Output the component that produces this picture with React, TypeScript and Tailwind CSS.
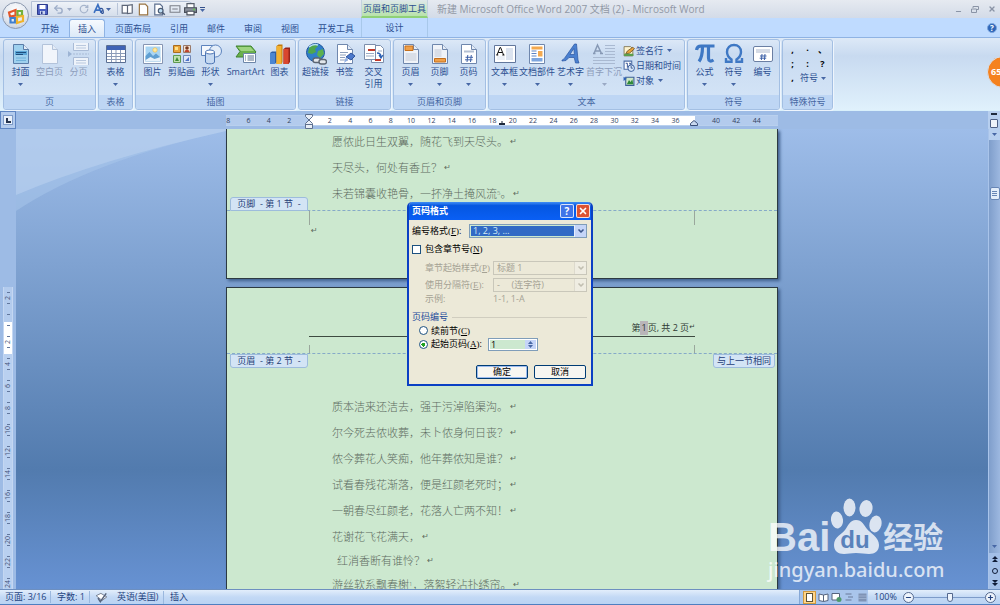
import type { ReactNode } from 'react';
import { Undo2, RotateCw, ChevronDown, X, Minus, Plus } from 'lucide-react';

const tabs = ['开始', '插入', '页面布局', '引用', '邮件', '审阅', '视图', '开发工具'];

const hRuler = [
    '8', '6', '4', '2', '', '2', '4', '6', '8', '10', '12', '14', '16', '18', '20', '22', '24',
    '26', '28', '30', '32', '34', '36', '', '40', '42', '44',
];

const vRuler = ['2', '', '2', '4', '6', '8', '10', '12', '14', '16', '18', '20', '22', '24'];

const pageOneLines = ['愿侬此日生双翼，随花飞到天尽头。', '天尽头，何处有香丘？'];

const pageTwoLines = [
    '质本洁来还洁去，强于污淖陷渠沟。',
    '尔今死去侬收葬，未卜侬身何日丧？',
    '侬今葬花人笑痴，他年葬侬知是谁？',
    '试看春残花渐落，便是红颜老死时；',
    '一朝春尽红颜老，花落人亡两不知！',
    '花谢花飞花满天，',
];

function Icon({ children, size = 22 }: { children: ReactNode; size?: number }) {
    return (
        <svg viewBox="0 0 22 22" width={size} height={size} fill="none" className="shrink-0" aria-hidden="true">
            {children}
        </svg>
    );
}

/* Blank sheet with a folded corner, shared by most of the page icons */
function Sheet({ fill = '#fff', stroke = '#6f87ad' }: { fill?: string; stroke?: string }) {
    return (
        <>
            <path d="M3.5 1.5h10l5 5v14h-15z" fill={fill} stroke={stroke} />
            <path d="M13.5 1.5v5h5" fill="#e4ecf7" stroke={stroke} />
        </>
    );
}

const icons: Record<string, ReactNode> = {
    cover: (
        <>
            <Sheet fill="#9fd0ee" stroke="#5a7ca8" />
            <path d="M5 8h12v4H5z" fill="#5aa5d6" />
            <path d="M6 9.500h10M6 11.500h7" stroke="#1d4f80" />
            <path d="M6 15h10M6 17.500h10" stroke="#6fb0d9" />
        </>
    ),
    blank: <Sheet fill="#f1f5fb" stroke="#b3c3da" />,
    pageBreak: (
        <>
            <path d="M5.500 0v7.500h15V0M5.500 22v-7.500h15V22" fill="#eef3fa" stroke="#a9bbd6" />
            <path d="M8 2.500h10M8 5h10M8 17.500h10M8 20h10" stroke="#b9c8de" />
            <path d="M5 11h16" stroke="#a9bbd6" strokeDasharray="2 1" />
            <path d="M0 8l4 3-4 3z" fill="#9db4d4" />
        </>
    ),
    table: (
        <>
            <path d="M1.500 2.500h19v17h-19z" fill="#fff" stroke="#5b6f93" />
            <path d="M2 3h18v4H2z" fill="#3f62b5" />
            <path d="M2 10.500h18M2 13.500h18M2 16.500h18M6.500 7v12M11 7v12M15.500 7v12" stroke="#8b9bb8" />
        </>
    ),
    picture: (
        <>
            <path d="M1.500 1.500h19v19h-19z" fill="#fff" stroke="#8796b3" />
            <path d="M3.500 3.500h15v15h-15z" fill="#a9d5f3" />
            <circle cx="13" cy="7" r="2.200" fill="#ffe9a0" stroke="#efb93d" strokeWidth=".6" />
            <path d="M3.500 13l4-4 3.500 4 3-2.500 4.500 4v4h-15z" fill="#5f9fd2" />
            <path d="M3.500 17l5-3 4 2 6-2v4.500h-15z" fill="#e7f2fa" />
        </>
    ),
    clip: (
        <>
            <path d="M2.500 2.500h7v7h-7z" fill="#e9a43b" stroke="#a86d1f" />
            <path d="M12.500 2.500h7v7h-7z" fill="#f3e3d5" stroke="#9a7a6a" />
            <path d="M2.500 12.500h7v7h-7z" fill="#bfe0b0" stroke="#5f9a50" />
            <path d="M12.500 12.500h7v7h-7z" fill="#dfe8f8" stroke="#7089b8" />
            <path d="M4 4h3v3H4z" fill="#ffe28a" />
            <circle cx="16" cy="5" r="1.800" fill="#7c3a1e" />
            <path d="M13.500 9c0-3 5-3 5 0z" fill="#c0452d" />
            <path d="M4 18l2-4 2 4z" fill="#3e8b33" />
            <path d="M14 18l4-4v4z" fill="#4f74c9" />
        </>
    ),
    shapes: (
        <>
            <path d="M1.500 2.500h11v10h-11z" fill="#f4f8fd" stroke="#5c83bd" />
            <circle cx="15.500" cy="8" r="6" fill="#e3edf9" stroke="#5c83bd" />
            <path d="M5.500 9v10c0 2.400 9 2.400 9 0V9z" fill="#c5d9f1" stroke="#4e76b4" />
            <ellipse cx="10" cy="9" rx="4.500" ry="2" fill="#fff" stroke="#4e76b4" />
        </>
    ),
    smart: (
        <>
            <path d="M1 3h15l5 6-5 5H1l4-5.500z" fill="#6ab04c" stroke="#3f8230" />
            <path d="M2.500 4h13l3.500 4H6z" fill="#9dd47f" />
            <path d="M8.500 10.500h12v9h-12z" fill="#fff" stroke="#6d86a8" />
            <path d="M10 13h1M12.500 13h6.500M10 15h1M12.500 15h6.500M10 17h1M12.500 17h6.500" stroke="#56708f" />
        </>
    ),
    chart: (
        <>
            <path d="M1 10l2-1.500h4.500V19L6 21H1z" fill="#2b5fa8" />
            <path d="M1 10h5v11H1z" fill="#4b86d2" />
            <path d="M7.500 3L9.500 1.500h4V19L12.500 21h-5z" fill="#c37a0b" />
            <path d="M7.500 3h5v18h-5z" fill="#f2b233" />
            <path d="M14.500 6l2-1.500h4.500V19l-1.500 2h-5z" fill="#97241a" />
            <path d="M14.500 6h5v15h-5z" fill="#d9472f" />
        </>
    ),
    link: (
        <>
            <circle cx="10.500" cy="9.500" r="9" fill="#2f7fc9" stroke="#1f559b" />
            <path d="M4 5c3-4 8-4 9-2l-3 3 1 3-4 2-4-1z" fill="#4ea64d" />
            <path d="M13 8l5-2 1 5-4 4-3-3z" fill="#5bb04f" />
            <path d="M4 4c3-2.500 6-3 9-2" stroke="#b9e0f5" strokeWidth="1.500" />
            <rect x="8" y="15" width="8" height="4.500" rx="2.200" stroke="#5c6572" strokeWidth="1.400" fill="#e2e6ea" />
            <rect x="14" y="16.500" width="7.500" height="4.500" rx="2.200" stroke="#5c6572" strokeWidth="1.400" fill="#e2e6ea" />
        </>
    ),
    bookmark: (
        <>
            <Sheet />
            <path d="M6 9.500h8M6 12h6M6 14.500h5M6 17h8" stroke="#8da0bd" />
            <path d="M12 14l5-4 4 3-4 4z" fill="#4b78cb" stroke="#2d549f" />
            <path d="M12 14l2 3-4 3z" fill="#8faee4" />
        </>
    ),
    cross: (
        <>
            <path d="M8.500 2.500h9l3 3v14h-12z" fill="#fff" stroke="#7c8eac" />
            <path d="M1.500 1.500h11v15h-11z" fill="#fff" stroke="#7c8eac" />
            <path d="M5 7h7" stroke="#c23a2c" strokeWidth="2" />
            <path d="M3 10.500h8M3 13h8M15 8h4" stroke="#9aabc5" />
            <path d="M12 17h6" stroke="#c23a2c" strokeWidth="2" />
            <path d="M14 10c3 0 4 1.500 4 4m-2-2l2 3 2-3" stroke="#2d62b5" strokeWidth="1.300" />
        </>
    ),
    header: (
        <>
            <Sheet fill="#f0f3f8" />
            <path d="M5 3h8v4.500H5z" fill="#f0a049" stroke="#c46f1c" />
            <path d="M5.500 10h11v8h-11z" fill="#d9dee7" />
        </>
    ),
    footer: (
        <>
            <Sheet fill="#f0f3f8" />
            <path d="M5.500 6h7v8h-7z" fill="#d9dee7" />
            <path d="M5.500 15.500h11v3.500h-11z" fill="#f0a049" stroke="#c46f1c" />
        </>
    ),
    number: (
        <>
            <Sheet />
            <path d="M6 8.500h10" stroke="#b5c1d4" strokeWidth="2" />
            <path d="M9.800 12l-.8 7M13.300 12l-.8 7M7.500 14.300h7.500M7 16.800h7.500" stroke="#3f62a8" />
        </>
    ),
    textbox: (
        <>
            <path d="M.5 2.500h21v17H.5z" fill="#fff" stroke="#62779c" />
            <path d="M12 5h7v12h-7z" fill="#dbe3ef" />
            <path d="M3 13h8v4H3z" fill="#edf1f7" />
            <path d="M3 12l3-7.500h.6l3 7.500M4.200 9.500h4M2.300 12h2M8.300 12h2.200" stroke="#111" />
        </>
    ),
    parts: (
        <>
            <path d="M3.500 1.500h15v19h-15z" fill="#fff" stroke="#6f87ad" />
            <path d="M5.500 3.500h11v3h-11z" fill="#f4a94f" />
            <path d="M5.500 8h5M5.500 10.500h5M5.500 13h5" stroke="#5c83c4" />
            <path d="M12 8h4.500v5.500H12z" fill="#f4a94f" />
            <path d="M5.500 15h11v3.500h-11z" fill="#7da5de" />
        </>
    ),
    wordart: (
        <path
            d="M2 17c1-.3 2-1 3-2.500L14.500 1h2L18 17l1 3h-3.500l-1.300-5.500H9L6 17.500 2 18zM10 11.500h4.400l-.6-6z"
            fill="#4a80d0"
            stroke="#2a55a0"
            strokeWidth=".7"
        />
    ),
    dropcap: (
        <>
            <path d="M1 10.500L4.500 2l4 8.500M2.500 8h5M0 10.500h2.500M7 10.500h3" stroke="#8799b5" strokeWidth="1.500" />
            <path d="M12 2.500h10M12 5.500h10M12 8.500h10M12 11.500h10M0 14.500h22M0 17.500h22M0 20.500h22" stroke="#a9b9d1" />
        </>
    ),
    pi: (
        <path
            d="M2.500 7C3 3.800 4.500 3 7 3h13.500M8.500 3.500c0 7-.5 11-3.500 15M14.500 3.500V15c0 3 2 4 5 2"
            stroke="#3f78c4"
            strokeWidth="3.200"
        />
    ),
    omega: (
        <path
            d="M3 15v3.800h5.500v-2.300C5.500 14.500 4 12 4 9c0-4.500 3-7 7-7s7 2.500 7 7c0 3-1.500 5.500-4.500 7.500v2.300H19V15"
            stroke="#3f78c4"
            strokeWidth="2.400"
        />
    ),
    numbering: (
        <>
            <rect x="1.500" y="3.500" width="19" height="15" rx="1.500" fill="#fff" stroke="#6b7fa3" />
            <path d="M4 6h14v4H4z" fill="#d5dbe6" />
            <path d="M10 11l-.6 6M13 11l-.6 6M8 13h6.500M7.700 15.200h6.500" stroke="#3f62a8" />
        </>
    ),
    sign: (
        <>
            <path d="M2 3h12l4 4v13H2z" fill="#fdf3cf" stroke="#7a6d47" strokeWidth="1.500" />
            <path d="M5 16l3-5 10-7 3 3-9 8z" fill="#e9a43b" stroke="#6e5122" strokeWidth="1.500" />
            <path d="M2 16h17v4H2z" fill="#5a9e4e" />
        </>
    ),
    date: (
        <>
            <path d="M2 2h14v15H2z" fill="#fff" stroke="#4d6da6" strokeWidth="2" />
            <path d="M5 6h3v8M11 6h3l-3 8" stroke="#1f3f86" strokeWidth="1.600" />
            <circle cx="15" cy="15" r="6" fill="#d7e6f9" stroke="#3c5f9e" strokeWidth="1.800" />
            <path d="M15 11v4h3" stroke="#24427c" strokeWidth="1.500" />
        </>
    ),
    object: (
        <>
            <path d="M5 4h15v15H5z" fill="#cfe7c7" stroke="#3b5f96" strokeWidth="2" />
            <path d="M7 17l4-8 3 4 3-5 2 9z" fill="#2f8a3a" />
            <path d="M1 3l6 4-6 4z" fill="#2d62b5" />
        </>
    ),
};

function Caret({ muted }: { muted?: boolean }) {
    return (
        <svg viewBox="0 0 5 3" width="5" height="3" aria-hidden="true">
            <path d="M0 0h5L2.500 3z" fill={muted ? '#9aa9c4' : '#4767a5'} />
        </svg>
    );
}

type ToolProps = { icon: string; label: ReactNode; width?: string; caret?: boolean; muted?: boolean };

function Tool({ icon, label, width = 'w-[29px]', caret, muted }: ToolProps) {
    return (
        <button
            type="button"
            className={`${width} flex flex-col items-center whitespace-nowrap leading-[12px] ${muted ? 'text-[#8d9dbb]' : 'text-[#2c4f91]'}`}
        >
            <Icon>{icons[icon]}</Icon>
            <span className="pt-px">{label}</span>
            {caret && (
                <span className="pt-[5px]">
                    <Caret muted={muted} />
                </span>
            )}
        </button>
    );
}

function SmallTool({ icon, label, caret }: { icon: string; label: string; caret?: boolean }) {
    return (
        <button type="button" className="flex items-center gap-px h-[15px] whitespace-nowrap">
            <Icon size={12}>{icons[icon]}</Icon>
            {label}
            {caret && <span className="pl-[3px]"><Caret /></span>}
        </button>
    );
}

function Group({ title, children }: { title: string; children: ReactNode }) {
    return (
        <section className="flex flex-col h-[71px] border border-[#a3bfe3] rounded-[3px] overflow-hidden shadow-[1px_1px_0_#eef5fd] bg-linear-to-b from-[#dce8f7] via-[#c9dbf1] via-20% to-[#d6e6f8]">
            <div className="flex flex-1 items-start px-[2px] pt-[3px]">{children}</div>
            <h2 className="h-[14px] leading-[13px] text-center bg-[#bed6f4] text-[#4567a3]">{title}</h2>
        </section>
    );
}

function TitleBar() {
    return (
        <header className="flex h-[18px] bg-linear-to-b from-[#e6eaf1] to-[#d3dbe8]">
            <div className="w-[361px] flex items-center pl-[31px]">
                <div className="flex items-center gap-[3px] h-[16px] w-[164px] pl-[5px] rounded-r-full border border-[#b4c1d6] bg-linear-to-b from-[#eef2f8] to-[#d5deeb]">
                    <button type="button" aria-label="保存">
                        <Icon size={11}>
                            <path d="M1 1h20v20H1z" fill="#4b5fc0" stroke="#2d3c8e" strokeWidth="2" />
                            <path d="M5 2h12v8H5z" fill="#fff" />
                            <path d="M6 14h10v7H6z" fill="#c9d4ee" />
                            <path d="M8 15h3v5H8z" fill="#2d3c8e" />
                        </Icon>
                    </button>
                    <button type="button" aria-label="撤消" className="flex items-center gap-[3px] pl-[2px] text-[#9dadc8]">
                        <Undo2 size={11} strokeWidth={3} />
                        <Caret muted />
                    </button>
                    <button type="button" aria-label="恢复" className="pl-[4px] text-[#a7b5cc]">
                        <RotateCw size={10} strokeWidth={3} />
                    </button>
                    <button type="button" aria-label="样式" className="flex items-center gap-px pl-px pr-[6px] border-r border-[#b8c4d8]">
                        <Icon size={12}>
                            <path d="M2 18L9 3l6 15M5 13h8" stroke="#3b6fc0" strokeWidth="3" />
                            <path d="M13 10c5-1 6 2 6 9M19 14c-5 0-6 5 0 5" stroke="#2b4f96" strokeWidth="2" />
                        </Icon>
                        <Caret />
                    </button>
                    <button type="button" aria-label="阅读">
                        <Icon size={13}>
                            <path d="M2 4h9v13H2zM11 4l8-1v14l-8 1z" fill="#fff" stroke="#5c6577" strokeWidth="2" />
                        </Icon>
                    </button>
                    <button type="button" aria-label="新建">
                        <Icon size={13}>
                            <path d="M4 2h10l4 4v14H4z" fill="#fff" stroke="#9a7441" strokeWidth="2" />
                        </Icon>
                    </button>
                    <button type="button" aria-label="打印预览">
                        <Icon size={13}>
                            <path d="M3 2h9l4 4v14H3z" fill="#fff" stroke="#5c6f8f" strokeWidth="2" />
                            <circle cx="13" cy="13" r="4" fill="#bcdcf3" stroke="#4b5a73" strokeWidth="2" />
                            <path d="M16 16l4 4" stroke="#4b5a73" strokeWidth="2.500" />
                        </Icon>
                    </button>
                    <button type="button" aria-label="页宽">
                        <Icon size={12}>
                            <path d="M1 5h20M1 17h20M2 5v12M20 5v12M6 11h10" stroke="#7b7f88" strokeWidth="2" />
                        </Icon>
                    </button>
                    <button type="button" aria-label="打印">
                        <Icon size={13}>
                            <path d="M5 1h12v8H5z" fill="#fff" stroke="#59606c" strokeWidth="2" />
                            <path d="M1 8h20v8H1z" fill="#8b919c" stroke="#4a505b" strokeWidth="2" />
                            <path d="M5 14h12v6H5z" fill="#fff" stroke="#4a505b" strokeWidth="2" />
                            <circle cx="17" cy="11" r="1.500" fill="#5ed048" />
                        </Icon>
                    </button>
                </div>
                <button type="button" aria-label="自定义" className="flex flex-col items-center gap-px pl-[5px]">
                    <span className="w-[5px] h-px bg-[#35508a]" />
                    <Caret />
                </button>
            </div>
            <div className="w-[67px] text-center leading-[17px] whitespace-nowrap text-[#2c4f91] border-x border-[#c3d3de] border-b-2 border-b-[#8fd177] bg-linear-to-b from-[#dfe8ea] to-[#b9e3ab]">
                页眉和页脚工具
            </div>
            <h1 className="flex-1 pl-[9px] text-[10px] leading-[19px] text-[#9198a5] whitespace-nowrap">
                新建 Microsoft Office Word 2007 文档 (2) - Microsoft Word
            </h1>
            <div className="flex items-center gap-[9px] pr-[4px] text-[#8a94a6]">
                <button type="button" aria-label="最小化" className="pt-[5px]"><Minus size={7} strokeWidth={4} /></button>
                <button type="button" aria-label="还原">
                    <svg viewBox="0 0 8 7" width="8" height="7" fill="none" stroke="currentColor" aria-hidden="true">
                        <path d="M2 2V.5h5.500v3H6M.5 3h5v3.500h-5z" />
                    </svg>
                </button>
                <button type="button" aria-label="关闭"><X size={8} strokeWidth={4} /></button>
            </div>
        </header>
    );
}

function TabRow() {
    return (
        <nav className="flex h-[19px] bg-[#bfdbff] text-[#2c4f91] whitespace-nowrap">
            <div className="w-[361px] flex gap-px pl-[32px] pt-px">
                {tabs.map((tab) => (
                    <button
                        key={tab}
                        type="button"
                        className={
                            tab === '插入'
                                ? 'shrink-0 px-[8px] border border-b-0 border-[#8fb3e3] rounded-t-[3px] bg-linear-to-b from-[#f6fafe] to-[#dce9f8] leading-[17px]'
                                : 'shrink-0 px-[9px] leading-[19px]'
                        }
                    >
                        {tab}
                    </button>
                ))}
            </div>
            <button type="button" className="w-[67px] leading-[20px] border-x border-[#a8c8ea]">设计</button>
            <div className="flex-1" />
            <button type="button" aria-label="帮助" className="self-center mr-[3px] mt-px size-[10px] rounded-full bg-[#2f66b8] border border-[#7ba5de] text-white font-bold text-[8px] leading-[8px]">
                ?
            </button>
        </nav>
    );
}

function Ribbon() {
    return (
        <div className="flex shrink-0 items-start gap-[2px] h-[74px] px-[3px] pt-px border-y border-t-[#8fb3e3] border-b-[#d9f0fb] bg-linear-to-b from-[#dde9f7] via-[#c8daf0] via-25% to-[#e0f1fc]">
            <Group title="页">
                <Tool icon="cover" label="封面" caret />
                <Tool icon="blank" label="空白页" muted />
                <Tool icon="pageBreak" label="分页" muted />
            </Group>
            <Group title="表格">
                <Tool icon="table" label="表格" caret />
            </Group>
            <Group title="插图">
                <Tool icon="picture" label="图片" />
                <Tool icon="clip" label="剪贴画" />
                <Tool icon="shapes" label="形状" caret />
                <Tool icon="smart" label="SmartArt" width="w-[41px]" />
                <Tool icon="chart" label="图表" width="w-[27px]" />
            </Group>
            <Group title="链接">
                <Tool icon="link" label="超链接" />
                <Tool icon="bookmark" label="书签" />
                <Tool icon="cross" label={<>交叉<br />引用</>} />
            </Group>
            <Group title="页眉和页脚">
                <Tool icon="header" label="页眉" caret />
                <Tool icon="footer" label="页脚" caret />
                <Tool icon="number" label="页码" caret />
            </Group>
            <Group title="文本">
                <Tool icon="textbox" label="文本框" width="w-[27px]" caret />
                <Tool icon="parts" label="文档部件" width="w-[38px]" caret />
                <Tool icon="wordart" label="艺术字" caret />
                <Tool icon="dropcap" label="首字下沉" width="w-[38px]" caret muted />
                <div className="w-[59px] text-[#2c4f91]">
                    <SmallTool icon="sign" label="签名行" caret />
                    <SmallTool icon="date" label="日期和时间" />
                    <SmallTool icon="object" label="对象" caret />
                </div>
            </Group>
            <Group title="符号">
                <Tool icon="pi" label="公式" caret />
                <Tool icon="omega" label="符号" caret />
                <Tool icon="numbering" label="编号" />
            </Group>
            <Group title="特殊符号">
                <div className="w-[45px] grid grid-cols-3 text-center font-bold leading-[14px] text-black">
                    {[',', '·', '、', ';', ':', '?'].map((mark) => (
                        <button key={mark} type="button">{mark}</button>
                    ))}
                    <button type="button">,</button>
                    <button type="button" className="col-span-2 flex items-center gap-[3px] font-normal text-[#2c4f91]">
                        符号
                        <Caret />
                    </button>
                </div>
            </Group>
        </div>
    );
}

function HorizontalRuler() {
    return (
        <div className="flex-1 flex justify-center items-center bg-[#9dbbe5]">
            <div className="relative w-[552px] h-[11px] border-y border-[#b9d0ee] bg-[linear-gradient(90deg,#b3cbed_83px,#fff_83px,#fff_469px,#b3cbed_469px)]">
                <div className="flex -ml-[8px] mr-[11px] text-[7px] leading-[9px] text-center text-[#33435f]">
                    {hRuler.map((n, i) => (
                        <span key={i} className="flex-1">{n}</span>
                    ))}
                </div>
                {/* indent markers */}
                <svg viewBox="0 0 8 15" width="8" height="15" className="absolute left-[79px] -top-[2px]" aria-hidden="true">
                    <path d="M.5.500h7v2L4 6 .5 2.500zM4 6l3.500 3.500v5h-7v-5zM.5 10.500h7" fill="#e8eef7" stroke="#5e708f" />
                </svg>
                <svg viewBox="0 0 8 6" width="8" height="6" className="absolute left-[464px] top-[4px]" aria-hidden="true">
                    <path d="M4 .5l3.500 3v2h-7v-2z" fill="#c9d8ef" stroke="#3a4f78" />
                </svg>
                <svg viewBox="0 0 6 4" width="6" height="4" className="absolute left-[273px] top-[5px]" aria-hidden="true">
                    <path d="M2.500 0h1v2H6v2H0V2h2.500z" fill="#1f2a3d" />
                </svg>
            </div>
        </div>
    );
}

function VerticalRuler() {
    return (
        <aside className="w-[16px] shrink-0 pt-[158px] pl-[3px] pr-[3px] bg-[#9dbbe5]">
            <div className="bg-[linear-gradient(#b3cbed_35px,#fff_35px,#fff_67px,#b9d0f0_67px)] border-x border-[#c4d7f2]">
                {vRuler.map((n, i) => (
                    <div key={i} className="h-[22px] flex flex-col items-center justify-between py-[5px]">
                        <span className="w-[3px] h-px bg-[#62779d]" />
                        <span className="-rotate-90 text-[7px] leading-[8px] text-[#44557a]">{n}</span>
                        <span className="w-[3px] h-px bg-[#62779d]" />
                    </div>
                ))}
            </div>
        </aside>
    );
}

function Mark() {
    return <span className="pl-[2px] text-[8px] leading-none font-['DejaVu_Sans']">↵</span>;
}

function Line({ children }: { children: ReactNode }) {
    return (
        <p className="flex items-center h-[26px] whitespace-nowrap">
            <span>{children}</span>
            <Mark />
        </p>
    );
}

const tagClass = 'absolute h-[14px] leading-[12px] border border-[#9dbcdc] bg-[#d3e4f5] text-[#1f3f77] text-center whitespace-nowrap';

function PageOne() {
    return (
        <article className="w-[552px] mx-auto h-[150px] bg-[#cce8cf] border border-t-0 border-[#2c3a42] shadow-[2px_2px_3px_#3f5f8c]">
            <div className="pl-[105px] text-[11px] font-light text-[#5d6b60]">
                {pageOneLines.map((line) => (
                    <Line key={line}>{line}</Line>
                ))}
                <Line>未若锦囊收艳骨，一抔净土掩风流<sup className="text-[6px]">5</sup>。</Line>
            </div>
            <div className="relative mt-[3px] border-t border-dashed border-[#86aac8]">
                <span className={`${tagClass} left-[3px] bottom-full w-[78px] rounded-t-[3px]`}>页脚&nbsp; - 第 1 节&nbsp; -</span>
                <div className="flex justify-between mx-[82px] h-[14px] border-x border-[#9aa79c]" />
                <p className="flex items-center pl-[82px] h-[12px] text-[#5d6b60]"><Mark /></p>
            </div>
        </article>
    );
}

function PageTwo() {
    return (
        <article className="w-[552px] mx-auto mt-[8px] h-[340px] bg-[#cce8cf] border border-[#2c3a42] shadow-[2px_2px_3px_#3f5f8c]">
            <div className="mx-[82px] h-[49px] flex items-end justify-end border-b border-[#3d4a40]">
                <p className="flex items-center h-[17px] text-[#2f3a33]">
                    第<span className="bg-[#b9b5b9] px-px leading-[14px]">1</span>页, 共 2 页
                    <span className="text-[7px] leading-none font-['DejaVu_Sans']">↵</span>
                </p>
            </div>
            <div className="mx-[82px] mt-[8px] h-[8px] border-x border-[#9aa79c]" />
            <div className="relative border-t border-dashed border-[#86aac8]">
                <span className={`${tagClass} left-[3px] top-0 w-[78px] rounded-b-[3px]`}>页眉&nbsp; - 第 2 节&nbsp; -</span>
                <span className={`${tagClass} right-[2px] top-0 w-[62px] rounded-b-[3px]`}>与上一节相同</span>
            </div>
            <div className="pl-[105px] pt-[40px] text-[11px] font-light text-[#5d6b60]">
                {pageTwoLines.map((line) => (
                    <Line key={line}>{line}</Line>
                ))}
                <p className="flex items-center h-[22px] pl-[5px] whitespace-nowrap">红消香断有谁怜？<Mark /></p>
                <Line>游丝软系飘春榭<sup className="text-[6px]">1</sup>，落絮轻沾扑绣帘。</Line>
            </div>
        </article>
    );
}

function ScrollBar() {
    return (
        <aside className="w-[12px] shrink-0 flex flex-col items-center border-l border-[#a9c4ea] bg-linear-to-r from-[#7f9ecb] to-[#9db8e0] text-[#1d3260]">
            <div className="w-full h-[11px] flex items-center justify-center bg-[#b7cfef]"><Caret /></div>
            <div className="h-[47px]" />
            <div className="w-[10px] h-[13px] flex flex-col items-center justify-center gap-px rounded-[2px] border border-[#6785b5] bg-[#e3edfa]">
                <span className="w-[5px] h-px bg-[#6785b5]" />
                <span className="w-[5px] h-px bg-[#6785b5]" />
                <span className="w-[5px] h-px bg-[#6785b5]" />
            </div>
            <div className="flex-1" />
            <button type="button" aria-label="向下滚动" className="h-[14px]"><Caret /></button>
            <div className="w-full h-[36px] flex flex-col items-center justify-around bg-[#a3bfe8]">
                <button type="button" aria-label="上一页">
                    <svg viewBox="0 0 6 6" width="6" height="6" aria-hidden="true"><path d="M0 3l3-3 3 3zM0 6l3-3 3 3z" fill="#101c38" /></svg>
                </button>
                <button type="button" aria-label="选择浏览对象" className="size-[6px] rounded-full border border-[#101c38]" />
                <button type="button" aria-label="下一页">
                    <svg viewBox="0 0 6 6" width="6" height="6" aria-hidden="true"><path d="M0 0l3 3 3-3zM0 3l3 3 3-3z" fill="#101c38" /></svg>
                </button>
            </div>
        </aside>
    );
}

function Backdrop() {
    return (
        <svg viewBox="0 0 210 82" className="absolute left-0 top-0 w-[210px] h-[82px]" aria-hidden="true">
            <path d="M0 0h210v2Q75 32 0 82z" fill="#a9c7ec" opacity=".5" />
            <path d="M0 0h210v2Q85 30 0 66z" fill="#c3d6f2" opacity=".45" />
        </svg>
    );
}

function Watermark() {
    return (
        <div className="absolute right-[43px] bottom-[5px] w-[177px] text-white/75 whitespace-nowrap">
            <div className="flex items-end">
                <span className="text-[40px] leading-[38px] font-bold font-['Liberation_Sans']">Bai</span>
                <div className="relative w-[46px] h-[58px] shrink-0 ml-[3px]">
                    <svg viewBox="0 0 52 58" width="52" height="58" className="-ml-[3px]" aria-hidden="true">
                        <g fill="#fff" opacity=".78">
                            <ellipse cx="7" cy="22" rx="6" ry="8.500" transform="rotate(-8 7 22)" />
                            <ellipse cx="19.500" cy="9.500" rx="6" ry="9" />
                            <ellipse cx="36" cy="10.500" rx="6.500" ry="8.500" transform="rotate(10 36 10.500)" />
                            <ellipse cx="45.500" cy="26" rx="6" ry="8.500" transform="rotate(12 45.500 26)" />
                            <path d="M26 22c6 0 8 5 11 9s12 8 12 16c0 6-4 9-10 9-4 0-8-1-13-1s-8 1-12 1c-6 0-10-3-10-9 0-8 8-11 11-15s5-10 11-10z" />
                        </g>
                    </svg>
                    <span className="absolute left-[7px] bottom-[2px] text-[24px] leading-[28px] font-bold text-[#5a82bb] font-['Liberation_Sans']">du</span>
                </div>
                <span className="text-[30px] leading-[38px] font-bold ml-[4px]">经验</span>
            </div>
            <a href="#jingyan" className="block text-[20px] leading-[28px] font-medium font-['Noto_Sans']">jingyan.baidu.com</a>
        </div>
    );
}

type ComboProps = { id: string; value: string; disabled?: boolean };

function Combo({ id, value, disabled }: ComboProps) {
    return (
        <div className={`relative flex-1 h-[14px] p-px border ${disabled ? 'border-[#c9c7ba]' : 'border-[#7f9db9] bg-[#cce8cf]'}`}>
            <select
                id={id}
                disabled={disabled}
                className={`block appearance-none w-full h-full pl-[2px] pr-[12px] leading-[10px] opacity-100 ${disabled ? 'text-[#a5a294]' : 'bg-[#316ac5] text-[#d5ecf5]'}`}
            >
                <option>{value}</option>
            </select>
            <span
                className={`absolute right-0 top-0 h-[12px] w-[12px] flex items-center justify-center pointer-events-none border-l ${disabled ? 'bg-[#efede2] border-[#dddacd] text-[#c1beb0]' : 'bg-[#c5d5f8] border-[#e8effd] text-[#3c568c]'}`}
            >
                <ChevronDown size={8} strokeWidth={5} />
            </span>
        </div>
    );
}

function Key({ children }: { children: string }) {
    return <span className="font-['Liberation_Serif']">(<u>{children}</u>)</span>;
}

function PageNumberDialog() {
    return (
        <form
            role="dialog"
            aria-label="页码格式"
            className="absolute left-1/2 top-[202px] -translate-x-1/2 w-[186px] h-[184px] flex flex-col rounded-t-[5px] overflow-hidden border-[2px] border-t-0 border-[#0a40c4] bg-[#ece9d8] text-black"
        >
            <div className="-mx-[2px] h-[18px] flex shrink-0 items-center gap-[2px] pl-[5px] pr-[3px] bg-linear-to-b from-[#3f8ef5] via-[#0557e0] via-20% to-[#0a5ff5]">
                <h2 className="flex-1 font-bold text-[9px] text-white">页码格式</h2>
                <button type="button" aria-label="帮助" className="size-[14px] rounded-[2px] border border-white/80 bg-[#3f74e8] text-white font-bold text-[10px] leading-[12px]">?</button>
                <button type="button" aria-label="关闭" className="size-[14px] rounded-[2px] border border-white/80 bg-[#dd5332] text-white flex items-center justify-center">
                    <X size={10} strokeWidth={4} />
                </button>
            </div>
            <div className="flex-1 flex flex-col pl-[3px] pr-[4px] pt-[4px] whitespace-nowrap">
                <div className="flex items-center">
                    <label htmlFor="format" className="w-[57px]">编号格式<Key>F</Key>:</label>
                    <Combo id="format" value="1, 2, 3, …" />
                </div>
                <div className="flex items-center gap-[4px] h-[14px] mt-[4px]">
                    <input id="chapter" type="checkbox" className="appearance-none size-[9px] border border-[#1c5180] bg-white" />
                    <label htmlFor="chapter">包含章节号<Key>N</Key></label>
                </div>
                <div className="flex items-center mt-[5px] pl-[13px] text-[#a5a294]">
                    <label htmlFor="style" className="w-[68px]">章节起始样式<Key>P</Key></label>
                    <Combo id="style" value="标题 1" disabled />
                </div>
                <div className="flex items-center mt-[3px] pl-[13px] text-[#a5a294]">
                    <label htmlFor="separator" className="w-[68px]">使用分隔符<Key>E</Key>:</label>
                    <Combo id="separator" value={'-\u00a0\u00a0\u00a0\u00a0\u00a0(连字符)'} disabled />
                </div>
                <div className="flex items-center h-[14px] pl-[13px] text-[#a5a294]">
                    <span className="w-[68px]">示例:</span>
                    <span>1-1, 1-A</span>
                </div>
                <fieldset>
                    <div className="flex items-center gap-[4px] h-[14px] mt-[4px]">
                        <span className="text-[#1c4a9a]">页码编号</span>
                        <hr className="flex-1 border-[#d0cdbf]" />
                    </div>
                    <div className="flex items-center gap-[3px] h-[13px] pl-[7px]">
                        <input id="continue" name="numbering" type="radio" className="appearance-none size-[9px] rounded-full border border-[#1c5180] bg-white" />
                        <label htmlFor="continue">续前节<Key>C</Key></label>
                    </div>
                    <div className="flex items-center gap-[3px] h-[14px] pl-[7px]">
                        <input id="start" name="numbering" type="radio" defaultChecked className="appearance-none size-[9px] rounded-full border border-[#1c5180] bg-white bg-[radial-gradient(#21a121_2px,transparent_2px)]" />
                        <label htmlFor="start" className="w-[54px]">起始页码<Key>A</Key>:</label>
                        <div className="flex h-[13px] w-[50px] border border-[#7f9db9] bg-white p-px">
                            <input aria-label="起始页码" defaultValue="1" className="min-w-0 flex-1 pl-px bg-[#cce8cf] leading-[9px]" />
                            <div className="w-[11px] flex flex-col items-center justify-evenly bg-[#c5d5f8]">
                                <button type="button" aria-label="增加" className="rotate-180 flex"><Caret /></button>
                                <button type="button" aria-label="减少" className="flex"><Caret /></button>
                            </div>
                        </div>
                    </div>
                </fieldset>
                <div className="flex justify-end gap-[6px] mt-[14px] pr-px">
                    <button type="button" className="w-[52px] h-[14px] leading-[12px] rounded-[2px] border border-[#003c74] bg-[#f7f6f1] shadow-[inset_0_0_0_1px_#9dbcf0]">确定</button>
                    <button type="button" className="w-[52px] h-[14px] leading-[12px] rounded-[2px] border border-[#003c74] bg-[#f7f6f1]">取消</button>
                </div>
            </div>
        </form>
    );
}

function StatusBar() {
    return (
        <footer className="flex shrink-0 items-center h-[16px] border-t border-[#6d8fc0] border-b border-b-[#4f7fc0] bg-linear-to-b from-[#e3eefb] via-[#c3d9f5] to-[#bad3f3] text-[#24437f] whitespace-nowrap">
            <div className="flex items-center divide-x divide-[#9bb8de]">
                <span className="w-[51px] pl-[5px]">页面: 3/16</span>
                <span className="w-[39px] pl-[6px]">字数: 1</span>
                <span className="w-[74px] pl-[5px] flex items-center gap-[9px]">
                    <Icon size={13}>
                        <path d="M2 8l8-4 10 6-8 6z" fill="#fff" stroke="#6c7688" strokeWidth="1.500" />
                        <path d="M5 12l4 6L19 4" stroke="#56627a" strokeWidth="2.500" />
                    </Icon>
                    英语(美国)
                </span>
                <span className="w-[29px] pl-[6px]">插入</span>
            </div>
            <div className="flex-1" />
            <div className="flex h-full items-center gap-[2px] pl-[3px] border-l border-[#86a8d6] bg-[#a9c5ec] text-[#44597f]">
                <button type="button" aria-label="页面视图" className="w-[13px] h-[13px] flex items-center justify-center border border-[#d09a3f] bg-[#ffd58a]">
                    <span className="w-[7px] h-[9px] border border-[#5d5335] bg-white" />
                </button>
                <button type="button" aria-label="阅读版式">
                    <Icon size={11}>
                        <path d="M2 4l9 2 9-2v13l-9 2-9-2zM11 6v13" fill="#fff" stroke="#55637d" strokeWidth="2" />
                    </Icon>
                </button>
                <button type="button" aria-label="Web 版式">
                    <Icon size={11}>
                        <path d="M2 3h15v13H2z" fill="#fff" stroke="#55637d" strokeWidth="2" />
                        <circle cx="16" cy="15" r="5" fill="#4f9a6b" />
                    </Icon>
                </button>
                <button type="button" aria-label="大纲视图">
                    <Icon size={11}>
                        <path d="M3 4h12M8 10h10M3 16h12" stroke="#7f93b5" strokeWidth="3" />
                    </Icon>
                </button>
                <button type="button" aria-label="普通视图">
                    <Icon size={11}>
                        <path d="M3 3h16v16H3z" fill="#7f93b5" />
                        <path d="M3 8h16M3 13h16" stroke="#b9cae4" />
                    </Icon>
                </button>
            </div>
            <button type="button" className="w-[35px] text-center">100%</button>
            <button type="button" aria-label="缩小" className="size-[11px] flex items-center justify-center rounded-full border border-[#55698f] bg-[#eef4fc]">
                <Minus size={7} strokeWidth={4} />
            </button>
            <input
                type="range"
                aria-label="缩放"
                defaultValue={50}
                className="appearance-none w-[71px] h-[9px] bg-[linear-gradient(transparent_4px,#7d9bc9_4px,#7d9bc9_5px,transparent_5px)] [&::-webkit-slider-thumb]:appearance-none [&::-webkit-slider-thumb]:w-[6px] [&::-webkit-slider-thumb]:h-[9px] [&::-webkit-slider-thumb]:rounded-b-[3px] [&::-webkit-slider-thumb]:border [&::-webkit-slider-thumb]:border-[#55698f] [&::-webkit-slider-thumb]:bg-[#eef4fc]"
            />
            <button type="button" aria-label="放大" className="mr-[4px] size-[11px] flex items-center justify-center rounded-full border border-[#55698f] bg-[#eef4fc]">
                <Plus size={7} strokeWidth={4} />
            </button>
        </footer>
    );
}

export default function App() {
    return (
        <div className="relative h-screen flex flex-col overflow-hidden bg-[#9dbbe5] text-[9px] leading-[12px] font-['Open_Sans','Noto_Sans_CJK_SC',sans-serif]">
            <TitleBar />
            <TabRow />
            <Ribbon />
            <div className="flex h-[18px] shrink-0">
                <button type="button" aria-label="制表符" className="w-[16px] flex items-center justify-center border border-[#5f86c4] bg-[#b3cbed]">
                    <span className="size-[10px] flex items-center justify-center border border-[#7f9cc9] bg-[#eaf1fb]">
                        <span className="size-[5px] border-l-2 border-b-2 border-[#26344f]" />
                    </span>
                </button>
                <HorizontalRuler />
                <div className="w-[12px] flex flex-col items-center justify-between pt-[2px] pb-px bg-[#b7cfef]">
                    <span className="w-[6px] h-[2px] bg-[#1f2a3d]" />
                    <span className="w-[8px] h-[9px] rounded-[1px] border border-[#4f6186] bg-[#eef3fa]" />
                </div>
            </div>
            <div className="flex flex-1 min-h-0">
                <VerticalRuler />
                <main className="relative flex-1 overflow-hidden bg-linear-to-b from-[#9ebde9] via-[#527bae] via-74% to-[#6792d3]">
                    <Backdrop />
                    <div className="relative">
                        <PageOne />
                        <PageTwo />
                    </div>
                    <Watermark />
                </main>
                <ScrollBar />
            </div>
            <StatusBar />
            <PageNumberDialog />

            {/* Orb over the title bar and the tabs */}
            <button type="button" aria-label="Office 按钮" className="absolute left-[2px] top-[2px] size-[27px] rounded-full border border-[#8b98ae] bg-[radial-gradient(circle_at_50%_30%,#ffffff,#dfe5ee_60%,#b4c0d3)] flex items-center justify-center">
                <svg viewBox="0 0 18 18" width="18" height="18" fill="none" strokeWidth="2.200" aria-hidden="true">
                    <path d="M2 5.500L8.500 3v5.500L3 9.500z" stroke="#e2572b" />
                    <path d="M10.500 4h4.500v4.500h-4.500z" stroke="#74b13c" />
                    <path d="M3.500 11h4.500v4.500H3.500z" stroke="#3f7fd0" />
                    <path d="M10 10l6-1v5l-6 2z" stroke="#f0b32b" />
                </svg>
            </button>
            <div className="absolute -right-[19px] top-[56px] size-[32px] pl-[3px] rounded-full border border-[#d9dfe8] bg-[#f5821f] text-white font-bold leading-[30px]">65</div>
        </div>
    );
}
